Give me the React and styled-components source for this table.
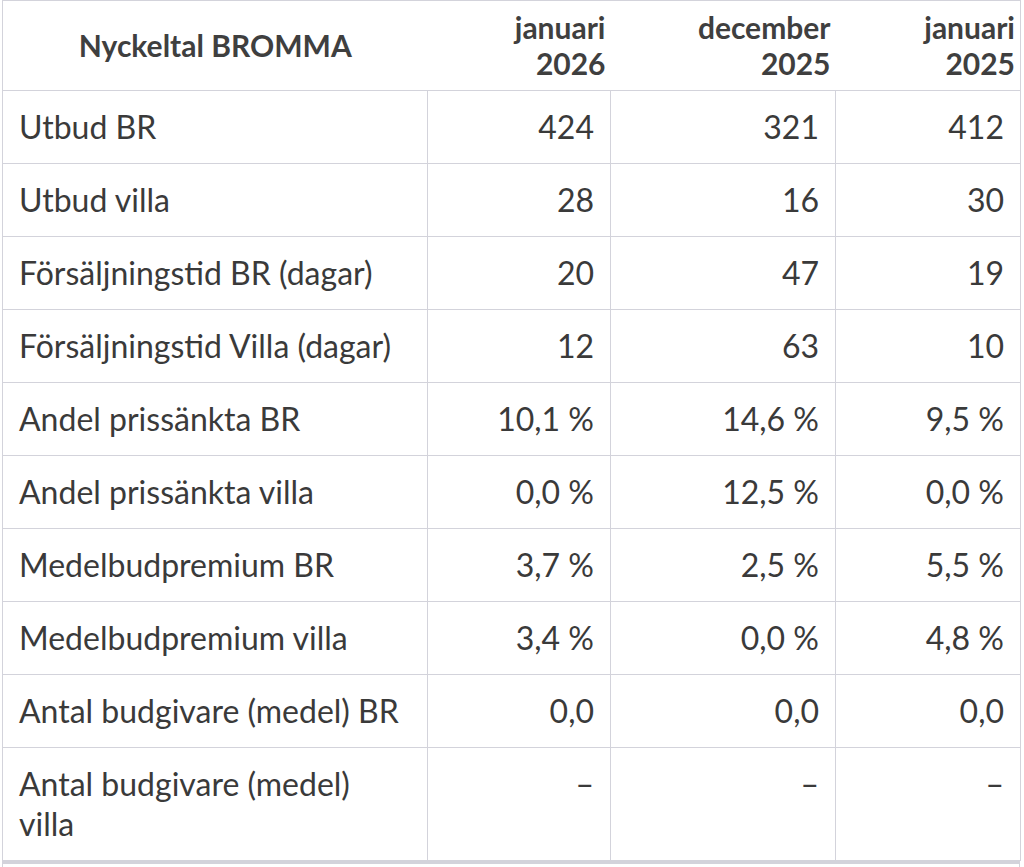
import styled, { createGlobalStyle } from "styled-components";

const GlobalStyle = createGlobalStyle`
  body {
    margin: 0;
    background: #ffffff;
    font-family: Lato, "Open Sans", sans-serif;
    color: #3a3a3a;
  }
`;

const Wrapper = styled.div`
  padding-left: 2px;
  width: 1018px;
`;

const Table = styled.table`
  width: 1018px;
  border-collapse: collapse;
  table-layout: fixed;
  border: 1px solid #d3d3db;
  font-size: 32px;
`;

const HeadCell = styled.th`
  font-weight: 700;
  font-size: 30px;
  line-height: 36px;
  color: #3f3f3f;
  padding: 8px 5px 9px;
  text-align: ${(p) => (p.$center ? "center" : "right")};
  vertical-align: middle;
  border-bottom: 1px solid #d3d3db;
`;

const Row = styled.tr`
  border-bottom: 1px solid #d3d3db;
`;

const LabelCell = styled.td`
  padding: 16px 22px 16px 16px;
  line-height: 40px;
  text-align: left;
  vertical-align: top;
  border-right: 1px solid #d3d3db;
`;

const ValueCell = styled.td`
  padding: 16px 16px 16px 16px;
  line-height: 40px;
  text-align: right;
  vertical-align: top;
  border-right: 1px solid #d3d3db;
  white-space: nowrap;
`;

const Footer = styled.div`
  height: 40px;
  border: 1px solid #d3d3db;
  border-top: 3px solid #d3d3db;
  border-bottom: none;
`;

const rows = [
  ["Utbud BR", "424", "321", "412"],
  ["Utbud villa", "28", "16", "30"],
  ["Försäljningstid BR (dagar)", "20", "47", "19"],
  ["Försäljningstid Villa (dagar)", "12", "63", "10"],
  ["Andel prissänkta BR", "10,1 %", "14,6 %", "9,5 %"],
  ["Andel prissänkta villa", "0,0 %", "12,5 %", "0,0 %"],
  ["Medelbudpremium BR", "3,7 %", "2,5 %", "5,5 %"],
  ["Medelbudpremium villa", "3,4 %", "0,0 %", "4,8 %"],
  ["Antal budgivare (medel) BR", "0,0", "0,0", "0,0"],
  ["Antal budgivare (medel) villa", "–", "–", "–"],
];

const App = () => {
  return (
    <Wrapper>
      <GlobalStyle />
      <Table>
        <colgroup>
          <col style={{ width: 425 }} />
          <col style={{ width: 183 }} />
          <col style={{ width: 225 }} />
          <col style={{ width: 185 }} />
        </colgroup>
        <thead>
          <tr>
            <HeadCell $center>Nyckeltal BROMMA</HeadCell>
            <HeadCell>
              januari
              <br />
              2026
            </HeadCell>
            <HeadCell>
              december
              <br />
              2025
            </HeadCell>
            <HeadCell>
              januari
              <br />
              2025
            </HeadCell>
          </tr>
        </thead>
        <tbody>
          {rows.map((r) => (
            <Row key={r[0]}>
              <LabelCell>{r[0]}</LabelCell>
              <ValueCell>{r[1]}</ValueCell>
              <ValueCell>{r[2]}</ValueCell>
              <ValueCell>{r[3]}</ValueCell>
            </Row>
          ))}
        </tbody>
      </Table>
      <Footer />
    </Wrapper>
  );
};

export default App;
